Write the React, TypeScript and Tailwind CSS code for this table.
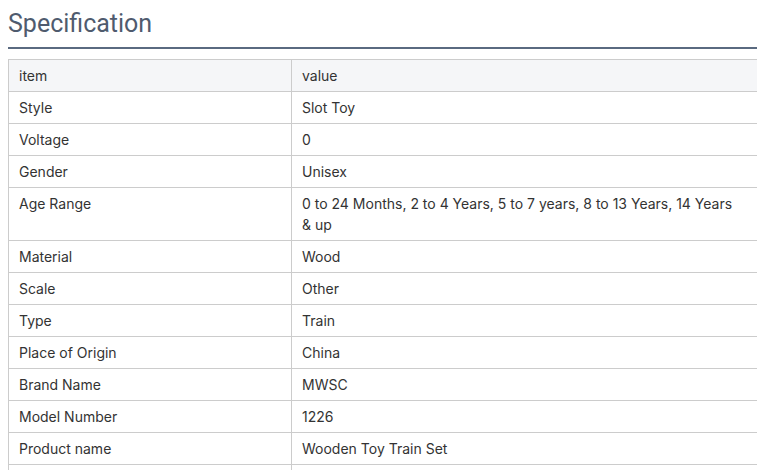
import React from "react";

const rows: [string, string][] = [
  ["Style", "Slot Toy"],
  ["Voltage", "0"],
  ["Gender", "Unisex"],
  ["Age Range", "0 to 24 Months, 2 to 4 Years, 5 to 7 years, 8 to 13 Years, 14 Years & up"],
  ["Material", "Wood"],
  ["Scale", "Other"],
  ["Type", "Train"],
  ["Place of Origin", "China"],
  ["Brand Name", "MWSC"],
  ["Model Number", "1226"],
  ["Product name", "Wooden Toy Train Set"],
];

export default function App() {
  return (
    <div className="bg-white w-[759px] h-[470px] overflow-hidden pl-2 font-['Inter',sans-serif]">
      <h2 className="font-['Roboto',sans-serif] text-[25px] leading-[30px] text-[#4f5b6e] pt-[9px] pb-[8px] border-b-2 border-[#5a6a80] w-[749px]">
        Specification
      </h2>
      <div className="mt-[10px] w-[749px] overflow-hidden">
        <table className="w-[752px] border-collapse text-[14px] leading-[21px] text-[#333]">
          <colgroup>
            <col className="w-[283px]" />
            <col />
          </colgroup>
          <thead>
            <tr className="bg-[#f5f6f8]">
              <td className="border border-[#cccccc] px-[10px] py-[5px]">item</td>
              <td className="border border-[#cccccc] px-[10px] py-[5px]">value</td>
            </tr>
          </thead>
          <tbody>
            {rows.map(([k, v]) => (
              <tr key={k}>
                <td className="border border-[#cccccc] px-[10px] py-[5px] align-top">{k}</td>
                <td className="border border-[#cccccc] px-[10px] py-[5px] align-top pr-[20px]">{v}</td>
              </tr>
            ))}
            <tr>
              <td className="border border-[#cccccc] h-[32px]"></td>
              <td className="border border-[#cccccc] h-[32px]"></td>
            </tr>
          </tbody>
        </table>
      </div>
    </div>
  );
}
